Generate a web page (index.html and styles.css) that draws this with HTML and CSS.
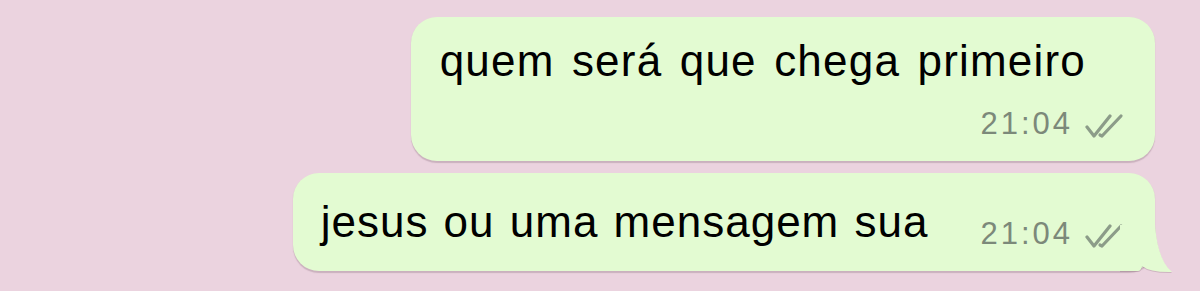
FILE: index.html
```html
<!DOCTYPE html>
<html lang="pt">
<head>
<meta charset="utf-8">
<title>Chat</title>
<link rel="stylesheet" href="styles.css">
</head>
<body>
<div class="chat">
  <div class="bubble bubble-block">
    <div class="msg-text msg-long">quem será que chega primeiro</div>
    <div class="meta">
      <span class="time">21:04</span>
      <svg class="ticks" viewBox="0 0 42 26" width="42" height="26" aria-hidden="true">
        <path d="M2 14 L9 23 L25 3" fill="none" stroke="#8c9c89" stroke-width="3.2" stroke-linecap="round" stroke-linejoin="round"/>
        <path d="M15 22 L17 23 L36 3" fill="none" stroke="#8c9c89" stroke-width="3.2" stroke-linecap="round" stroke-linejoin="round"/>
      </svg>
    </div>
  </div>
  <div class="bubble bubble-inline last">
    <div class="msg-text msg-short">jesus ou uma mensagem sua</div>
    <div class="meta meta-inline">
      <span class="time">21:04</span>
      <svg class="ticks" viewBox="0 0 42 26" width="42" height="26" aria-hidden="true">
        <path d="M2 14 L9 23 L25 3" fill="none" stroke="#8c9c89" stroke-width="3.2" stroke-linecap="round" stroke-linejoin="round"/>
        <path d="M15 22 L17 23 L36 3" fill="none" stroke="#8c9c89" stroke-width="3.2" stroke-linecap="round" stroke-linejoin="round"/>
      </svg>
    </div>
    <svg class="tail" viewBox="0 0 55 50" width="55" height="50" aria-hidden="true">
      <path d="M0 46 L18 46 Q21 46 22 41 Q30 47.5 52 47 Q38 36 35 0 L0 0 Z" fill="#e3fbd2"/>
    </svg>
  </div>
</div>
</body>
</html>
```

FILE: styles.css
```css
html, body {
  margin: 0;
  padding: 0;
}
body {
  background: #ebd3df;
  width: 1200px;
  height: 291px;
  overflow: hidden;
  font-family: "Liberation Sans", Arial, sans-serif;
}
.chat {
  display: flex;
  flex-direction: column;
  align-items: flex-end;
  gap: 12px;
  padding: 17px 45px 0 0;
}
.bubble {
  position: relative;
  background: #e3fbd2;
  border-radius: 26px;
  box-shadow: 0 1.5px 1px rgba(120, 90, 105, 0.28);
  color: #000;
}
.msg-text {
  font-size: 44px;
  line-height: 48px;
  letter-spacing: 1.2px;
  word-spacing: 3px;
  white-space: nowrap;
}
.msg-long {
  margin-right: 41px;
  word-spacing: 4px;
}
.msg-short {
  letter-spacing: 1px;
  word-spacing: 2px;
}
.bubble-block {
  padding: 20px 28px 19px 29px;
  display: flex;
  flex-direction: column;
}
.bubble-block .meta {
  align-self: flex-end;
  margin-top: 21px;
}
.meta {
  display: flex;
  align-items: center;
  gap: 12px;
  height: 36px;
}
.time {
  font-size: 31px;
  line-height: 36px;
  color: #7c897a;
  letter-spacing: 3px;
}
.ticks {
  display: block;
  margin-top: 4px;
}
.bubble-inline {
  display: flex;
  align-items: flex-start;
  padding: 25px 28px 19px 28px;
}
.meta-inline {
  margin-top: 17.5px;
  margin-left: 52px;
}
.tail {
  position: absolute;
  right: -20px;
  bottom: -4px;
  filter: drop-shadow(0 1.5px 0.5px rgba(120, 90, 105, 0.25));
}
```
